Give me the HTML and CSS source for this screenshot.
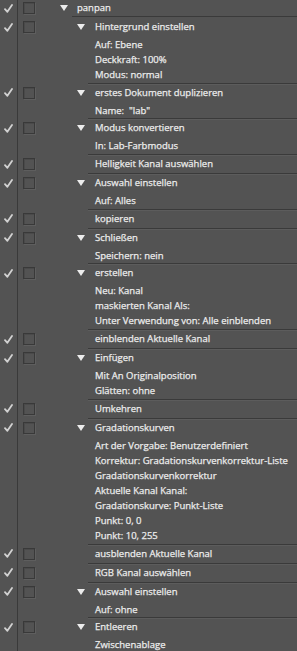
FILE: index.html
```html
<!DOCTYPE html>
<html lang="de">

<head>
    <meta charset="UTF-8">
    <title>Aktionen</title>
    <link rel="stylesheet" href="styles.css">
</head>

<body>
    <div class="actions">
        <!-- Aktionsset -->
        <div class="set">
            <div class="chk"><div class="cell"><svg class="tick" width="9" height="9" viewBox="0 0 9 9"><path d="M1 5.2 L3.4 7.8 L8 1" /></svg></div></div>
            <div class="dlg dlg-set"><div class="cell"><i class="box"></i></div></div>
            <div class="tri-col tri-set"><div class="cell"><i class="tri"></i></div></div>
            <div class="set-name">panpan</div>
        </div>

        <div class="step first">
            <div class="chk"><div class="cell"><svg class="tick" width="9" height="9" viewBox="0 0 9 9"><path d="M1 5.2 L3.4 7.8 L8 1" /></svg></div></div>
            <div class="dlg"><div class="cell"><i class="box"></i></div></div>
            <div class="tri-col"><div class="cell"><i class="tri"></i></div></div>
            <div class="body">
                <div class="cmd">Hintergrund einstellen</div>
                <ul class="params">
                    <li>Auf: Ebene</li>
                    <li>Deckkraft: 100%</li>
                    <li>Modus: normal</li>
                </ul>
            </div>
        </div>

        <div class="step">
            <div class="chk"><div class="cell"><svg class="tick" width="9" height="9" viewBox="0 0 9 9"><path d="M1 5.2 L3.4 7.8 L8 1" /></svg></div></div>
            <div class="dlg"><div class="cell"><i class="box"></i></div></div>
            <div class="tri-col"><div class="cell"><i class="tri"></i></div></div>
            <div class="body">
                <div class="cmd">erstes Dokument duplizieren</div>
                <ul class="params">
                    <li>Name: &nbsp;"lab"</li>
                </ul>
            </div>
        </div>

        <div class="step">
            <div class="chk"><div class="cell"><svg class="tick" width="9" height="9" viewBox="0 0 9 9"><path d="M1 5.2 L3.4 7.8 L8 1" /></svg></div></div>
            <div class="dlg"><div class="cell"><i class="box"></i></div></div>
            <div class="tri-col"><div class="cell"><i class="tri"></i></div></div>
            <div class="body">
                <div class="cmd">Modus konvertieren</div>
                <ul class="params">
                    <li>In: Lab-Farbmodus</li>
                </ul>
            </div>
        </div>

        <div class="step">
            <div class="chk"><div class="cell"><svg class="tick" width="9" height="9" viewBox="0 0 9 9"><path d="M1 5.2 L3.4 7.8 L8 1" /></svg></div></div>
            <div class="dlg"><div class="cell"><i class="box"></i></div></div>
            <div class="tri-col"></div>
            <div class="body">
                <div class="cmd">Helligkeit Kanal auswählen</div>
            </div>
        </div>

        <div class="step">
            <div class="chk"><div class="cell"><svg class="tick" width="9" height="9" viewBox="0 0 9 9"><path d="M1 5.2 L3.4 7.8 L8 1" /></svg></div></div>
            <div class="dlg"><div class="cell"><i class="box"></i></div></div>
            <div class="tri-col"><div class="cell"><i class="tri"></i></div></div>
            <div class="body">
                <div class="cmd">Auswahl einstellen</div>
                <ul class="params">
                    <li>Auf: Alles</li>
                </ul>
            </div>
        </div>

        <div class="step">
            <div class="chk"><div class="cell"><svg class="tick" width="9" height="9" viewBox="0 0 9 9"><path d="M1 5.2 L3.4 7.8 L8 1" /></svg></div></div>
            <div class="dlg"><div class="cell"><i class="box"></i></div></div>
            <div class="tri-col"></div>
            <div class="body">
                <div class="cmd">kopieren</div>
            </div>
        </div>

        <div class="step">
            <div class="chk"><div class="cell"><svg class="tick" width="9" height="9" viewBox="0 0 9 9"><path d="M1 5.2 L3.4 7.8 L8 1" /></svg></div></div>
            <div class="dlg"><div class="cell"><i class="box"></i></div></div>
            <div class="tri-col"><div class="cell"><i class="tri"></i></div></div>
            <div class="body">
                <div class="cmd">Schließen</div>
                <ul class="params">
                    <li>Speichern: nein</li>
                </ul>
            </div>
        </div>

        <div class="step">
            <div class="chk"><div class="cell"><svg class="tick" width="9" height="9" viewBox="0 0 9 9"><path d="M1 5.2 L3.4 7.8 L8 1" /></svg></div></div>
            <div class="dlg"><div class="cell"><i class="box"></i></div></div>
            <div class="tri-col"><div class="cell"><i class="tri"></i></div></div>
            <div class="body">
                <div class="cmd">erstellen</div>
                <ul class="params">
                    <li>Neu: Kanal</li>
                    <li>maskierten Kanal Als:</li>
                    <li>Unter Verwendung von: Alle einblenden</li>
                </ul>
            </div>
        </div>

        <div class="step">
            <div class="chk"><div class="cell"><svg class="tick" width="9" height="9" viewBox="0 0 9 9"><path d="M1 5.2 L3.4 7.8 L8 1" /></svg></div></div>
            <div class="dlg"><div class="cell"><i class="box"></i></div></div>
            <div class="tri-col"></div>
            <div class="body">
                <div class="cmd">einblenden Aktuelle Kanal</div>
            </div>
        </div>

        <div class="step">
            <div class="chk"><div class="cell"><svg class="tick" width="9" height="9" viewBox="0 0 9 9"><path d="M1 5.2 L3.4 7.8 L8 1" /></svg></div></div>
            <div class="dlg"><div class="cell"><i class="box"></i></div></div>
            <div class="tri-col"><div class="cell"><i class="tri"></i></div></div>
            <div class="body">
                <div class="cmd">Einfügen</div>
                <ul class="params">
                    <li>Mit An Originalposition</li>
                    <li>Glätten: ohne</li>
                </ul>
            </div>
        </div>

        <div class="step">
            <div class="chk"><div class="cell"><svg class="tick" width="9" height="9" viewBox="0 0 9 9"><path d="M1 5.2 L3.4 7.8 L8 1" /></svg></div></div>
            <div class="dlg"><div class="cell"><i class="box"></i></div></div>
            <div class="tri-col"></div>
            <div class="body">
                <div class="cmd">Umkehren</div>
            </div>
        </div>

        <div class="step">
            <div class="chk"><div class="cell"><svg class="tick" width="9" height="9" viewBox="0 0 9 9"><path d="M1 5.2 L3.4 7.8 L8 1" /></svg></div></div>
            <div class="dlg"><div class="cell"><i class="box"></i></div></div>
            <div class="tri-col"><div class="cell"><i class="tri"></i></div></div>
            <div class="body">
                <div class="cmd">Gradationskurven</div>
                <ul class="params">
                    <li>Art der Vorgabe: Benutzerdefiniert</li>
                    <li>Korrektur: Gradationskurvenkorrektur-Liste</li>
                    <li>Gradationskurvenkorrektur</li>
                    <li>Aktuelle Kanal Kanal:</li>
                    <li>Gradationskurve: Punkt-Liste</li>
                    <li>Punkt: 0, 0</li>
                    <li>Punkt: 10, 255</li>
                </ul>
            </div>
        </div>

        <div class="step">
            <div class="chk"><div class="cell"><svg class="tick" width="9" height="9" viewBox="0 0 9 9"><path d="M1 5.2 L3.4 7.8 L8 1" /></svg></div></div>
            <div class="dlg"><div class="cell"><i class="box"></i></div></div>
            <div class="tri-col"></div>
            <div class="body">
                <div class="cmd">ausblenden Aktuelle Kanal</div>
            </div>
        </div>

        <div class="step">
            <div class="chk"><div class="cell"><svg class="tick" width="9" height="9" viewBox="0 0 9 9"><path d="M1 5.2 L3.4 7.8 L8 1" /></svg></div></div>
            <div class="dlg"><div class="cell"><i class="box"></i></div></div>
            <div class="tri-col"></div>
            <div class="body">
                <div class="cmd">RGB Kanal auswählen</div>
            </div>
        </div>

        <div class="step">
            <div class="chk"><div class="cell"><svg class="tick" width="9" height="9" viewBox="0 0 9 9"><path d="M1 5.2 L3.4 7.8 L8 1" /></svg></div></div>
            <div class="dlg"><div class="cell"><i class="box"></i></div></div>
            <div class="tri-col"><div class="cell"><i class="tri"></i></div></div>
            <div class="body">
                <div class="cmd">Auswahl einstellen</div>
                <ul class="params">
                    <li>Auf: ohne</li>
                </ul>
            </div>
        </div>

        <div class="step">
            <div class="chk"><div class="cell"><svg class="tick" width="9" height="9" viewBox="0 0 9 9"><path d="M1 5.2 L3.4 7.8 L8 1" /></svg></div></div>
            <div class="dlg"><div class="cell"><i class="box"></i></div></div>
            <div class="tri-col"><div class="cell"><i class="tri"></i></div></div>
            <div class="body">
                <div class="cmd">Entleeren</div>
                <ul class="params">
                    <li>Zwischenablage</li>
                </ul>
            </div>
        </div>
    </div>
</body>

</html>
```

FILE: styles.css
```css
:root {
    --panel-bg: #535353;
    --line-dark: #3a3a3a;
    --line-light: #5c5c5c;
    --text-color: #ececec;
    --tick-color: #d2d2d2;
}

* {
    margin: 0;
    padding: 0;
    box-sizing: border-box;
}

body {
    font-family: 'Open Sans', 'Liberation Sans', sans-serif;
    font-size: 9.5px;
    color: var(--text-color);
    background-color: var(--panel-bg);
    -webkit-text-stroke: 0.25px var(--text-color);
    overflow: hidden;
}

.actions {
    min-height: 100vh;
    background-color: var(--panel-bg);
}

/* rows: check column | dialog column | triangle | content */
.set,
.step {
    display: flex;
}

.chk {
    width: 18px;
    flex: none;
    border-right: 1px solid var(--line-dark);
}

.step .chk,
.step .dlg,
.step .tri-col {
    padding-top: 1px;
}

.cell {
    height: 18px;
    display: flex;
    align-items: center;
    justify-content: center;
}

.set .cell {
    height: 16px;
}

.tick path {
    fill: none;
    stroke: var(--tick-color);
    stroke-width: 1.8;
    stroke-linecap: round;
    stroke-linejoin: round;
}

.dlg {
    width: 54px;
    flex: none;
}

.dlg .cell {
    justify-content: flex-start;
    padding-left: 5px;
}

.dlg-set {
    width: 38px;
}

.box {
    display: block;
    width: 12px;
    height: 12px;
    border: 1px solid #393939;
    box-shadow: inset 1px 1px 0 #4a4a4a, 1px 1px 0 #5e5e5e;
}

.tri-col {
    width: 16px;
    flex: none;
}

.tri-col .cell {
    justify-content: flex-start;
    padding-left: 5px;
}

.tri-set .cell {
    padding-left: 4px;
}

.tri {
    display: block;
    width: 0;
    height: 0;
    border-left: 4.5px solid transparent;
    border-right: 4.5px solid transparent;
    border-top: 6px solid #ececec;
}

.set-name {
    flex: 1;
    height: 17px;
    line-height: 16px;
    padding-left: 5px;
    border-bottom: 1px solid var(--line-dark);
}

.body {
    flex: 1;
    border-top: 1px solid var(--line-dark);
    box-shadow: inset 0 1px 0 var(--line-light);
    padding-left: 7px;
}

.step.first .body {
    border-top-color: transparent;
    box-shadow: none;
}

.cmd {
    height: 18px;
    line-height: 18px;
    white-space: nowrap;
}

.params {
    list-style: none;
    padding-top: 1px;
    padding-bottom: 0.7px;
}

.params li {
    height: 15px;
    line-height: 15px;
    white-space: nowrap;
}
```
